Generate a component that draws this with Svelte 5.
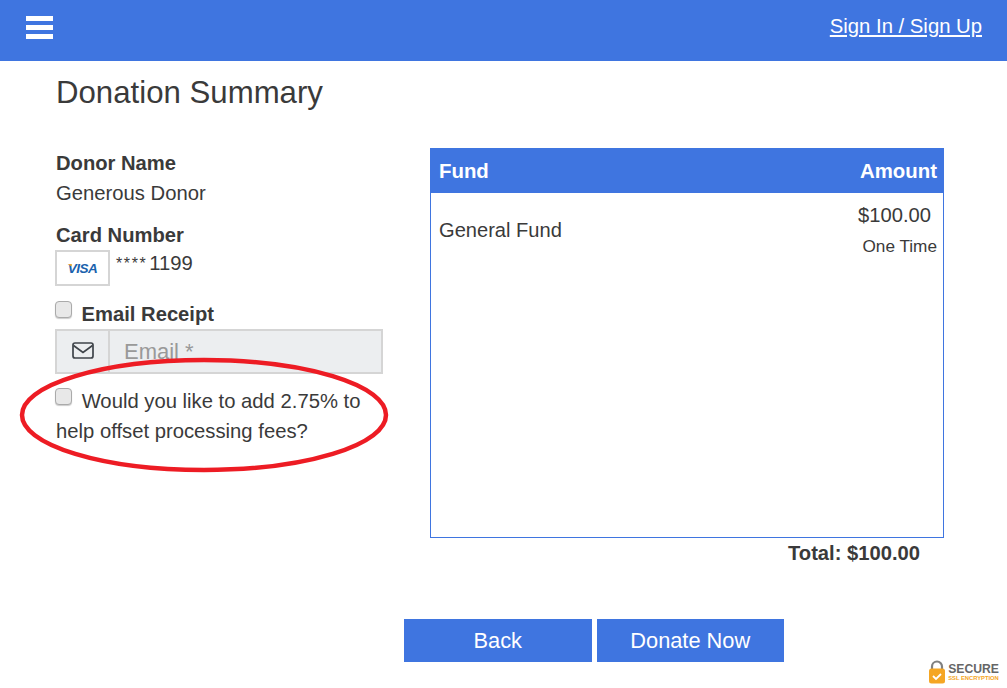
<script>
  let emailReceipt = false;
  let addFees = false;
  let email = "";
  const gifts = [{ fund: "General Fund", amount: "$100.00", freq: "One Time" }];
</script>

<header>
  <button class="burger" aria-label="Menu"><span></span><span></span><span></span></button>
  <a href="#signin">Sign In / Sign Up</a>
</header>

<main>
  <h1>Donation Summary</h1>
  <div class="columns">
    <section class="left">
      <p class="label">Donor Name</p>
      <p class="value">Generous Donor</p>
      <p class="label card-label">Card Number</p>
      <div class="card">
        <div class="visa"><i>VISA</i></div>
        <span class="digits"><small>****</small>1199</span>
      </div>
      <label class="label receipt">
        <input type="checkbox" bind:checked={emailReceipt} />
        Email Receipt
      </label>
      <div class="email">
        <div class="addon">
          <svg width="22" height="17" viewBox="0 0 22 17" fill="none" stroke="#3f444a" stroke-width="1.7">
            <rect x="1" y="1" width="20" height="15" rx="2" />
            <path d="M1.5 3.5 11 10.5l9.5-7" />
          </svg>
        </div>
        <input type="text" placeholder="Email *" bind:value={email} disabled />
      </div>
      <label class="fees">
        <input type="checkbox" bind:checked={addFees} />
        Would you like to add 2.75% to help offset processing fees?
      </label>
      <svg class="circle" width="372" height="118" viewBox="0 0 372 118" fill="none">
        <ellipse cx="185" cy="58" rx="182" ry="55" stroke="#ed1c24" stroke-width="4.5" />
      </svg>
    </section>

    <section class="right">
      <div class="table">
        <div class="thead"><span>Fund</span><span>Amount</span></div>
        {#each gifts as gift}
          <div class="row">
            <span class="fund">{gift.fund}</span>
            <div class="sum">
              <span class="amount">{gift.amount}</span>
              <span class="freq">{gift.freq}</span>
            </div>
          </div>
        {/each}
      </div>
      <p class="total">Total: $100.00</p>
    </section>
  </div>

  <div class="actions">
    <button>Back</button>
    <button>Donate Now</button>
  </div>
</main>

<div class="secure">
  <svg width="16" height="24" viewBox="0 0 16 24">
    <path d="M3 10V6.5a5 5 0 0 1 10 0V10" fill="none" stroke="#808080" stroke-width="2.2" />
    <rect x="0" y="8.5" width="16" height="15" rx="2.5" fill="#f5a623" />
    <path d="M4 16l3 3 5-5" fill="none" stroke="#fff" stroke-width="1.8" />
  </svg>
  <div class="secure-text">
    <b>SECURE</b>
    <em>SSL ENCRYPTION</em>
  </div>
</div>

<style>
  :global(body) {
    font-family: "Liberation Sans", Arial, sans-serif;
    color: #3a3a3a;
    background: #fff;
    height: 688px;
    overflow: hidden;
  }
  * {
    box-sizing: border-box;
  }
  p {
    margin: 0;
  }
  header {
    height: 61px;
    background: #3f75e0;
    display: flex;
    justify-content: space-between;
    align-items: center;
    padding: 0 25px 7px 26px;
  }
  header a {
    color: #fff;
    font-size: 20.3px;
    text-decoration: underline;
    margin-bottom: 1px;
  }
  .burger {
    width: 27px;
    padding: 0;
    border: none;
    background: none;
    display: flex;
    flex-direction: column;
    gap: 4px;
  }
  .burger span {
    height: 5px;
    background: #fff;
  }
  main {
    padding: 0 0 0 56px;
  }
  h1 {
    font-size: 31.2px;
    font-weight: 400;
    line-height: 34px;
    margin: 0;
    padding-top: 15px;
  }
  .columns {
    display: flex;
    gap: 47px;
    margin-top: 38px;
  }
  .left {
    width: 327px;
    position: relative;
    font-size: 20.25px;
  }
  .label {
    font-weight: 700;
    font-size: 20.2px;
    line-height: 30px;
  }
  .value {
    line-height: 30px;
  }
  .card-label {
    margin-top: 12px;
  }
  .card {
    display: flex;
    gap: 6px;
    height: 36px;
    margin-left: -1px;
  }
  .visa {
    width: 55px;
    height: 36px;
    border: 2px solid #d5d5d5;
    display: flex;
    align-items: center;
    justify-content: center;
    background: #fff;
  }
  .visa i {
    position: relative;
    font-weight: 700;
    font-size: 13.5px;
    color: #1a62ad;
    letter-spacing: -0.5px;
  }
  .visa i::before {
    content: "";
    position: absolute;
    left: -1px;
    top: 3px;
    width: 5px;
    height: 3px;
    background: #eea62f;
    clip-path: polygon(0 0, 100% 0, 100% 100%);
  }
  .digits {
    line-height: 26px;
  }
  .digits small {
    font-size: 16px;
    letter-spacing: 1.6px;
    margin-right: 2px;
    vertical-align: 1px;
  }
  .receipt {
    display: block;
    margin-top: 13px;
    margin-left: -1px;
  }
  input[type="checkbox"] {
    width: 17px;
    height: 17px;
    margin: 0 4px 0 0;
    appearance: none;
    background: #e8e8e8;
    border: 1px solid #aaa;
    border-radius: 4px;
    box-shadow: 0 1px 1px #ccc;
    vertical-align: 3px;
  }
  .email {
    display: flex;
    height: 45px;
    margin-left: -1px;
  }
  .addon {
    width: 55px;
    background: #eceef0;
    border: 2px solid #d5d5d5;
    display: flex;
    align-items: center;
    justify-content: center;
    padding-bottom: 2px;
  }
  .email input {
    flex: 1;
    min-width: 0;
    background: #eceef0;
    border: 2px solid #d5d5d5;
    border-left: none;
    padding: 0 14px;
    font: 22px "Liberation Sans", Arial, sans-serif;
  }
  .email input::placeholder {
    color: #999;
    opacity: 1;
  }
  .fees {
    display: block;
    margin-top: 12px;
    line-height: 30px;
  }
  .fees input {
    margin-left: -1px;
  }
  .circle {
    position: absolute;
    left: -37px;
    top: 209px;
    pointer-events: none;
  }
  .right {
    width: 514px;
  }
  .table {
    height: 390px;
    border: 1px solid #3f75e0;
  }
  .thead {
    height: 45px;
    margin: -1px -1px 0;
    background: #3f75e0;
    color: #fff;
    font-weight: 700;
    font-size: 20.4px;
    display: flex;
    justify-content: space-between;
    align-items: center;
    padding: 1px 7px 0 9px;
  }
  .row {
    display: flex;
    justify-content: space-between;
    align-items: center;
    padding: 8px 6px 0 8px;
  }
  .fund {
    font-size: 20.1px;
    margin-bottom: 4px;
  }
  .sum {
    display: flex;
    flex-direction: column;
    align-items: flex-end;
  }
  .amount {
    font-size: 20.2px;
    line-height: 28px;
    padding-right: 6px;
  }
  .freq {
    font-size: 17.2px;
    line-height: 34px;
  }
  .total {
    font-weight: 700;
    font-size: 20.2px;
    text-align: right;
    padding-right: 24px;
    line-height: 30px;
  }
  .actions {
    display: flex;
    gap: 5px;
    margin: 51px 0 0 348px;
  }
  .actions button {
    width: 187.5px;
    height: 43px;
    background: #3f75e0;
    color: #fff;
    border: none;
    font: 21.8px "Liberation Sans", Arial, sans-serif;
  }
  .secure {
    position: absolute;
    right: 8px;
    top: 660px;
    display: flex;
    gap: 3px;
    align-items: center;
  }
  .secure-text {
    display: flex;
    flex-direction: column;
    line-height: 1;
    gap: 1px;
  }
  .secure b {
    font-size: 12.2px;
    color: #666;
  }
  .secure em {
    font-style: normal;
    font-weight: 700;
    font-size: 5.8px;
    color: #f5a623;
  }
</style>
